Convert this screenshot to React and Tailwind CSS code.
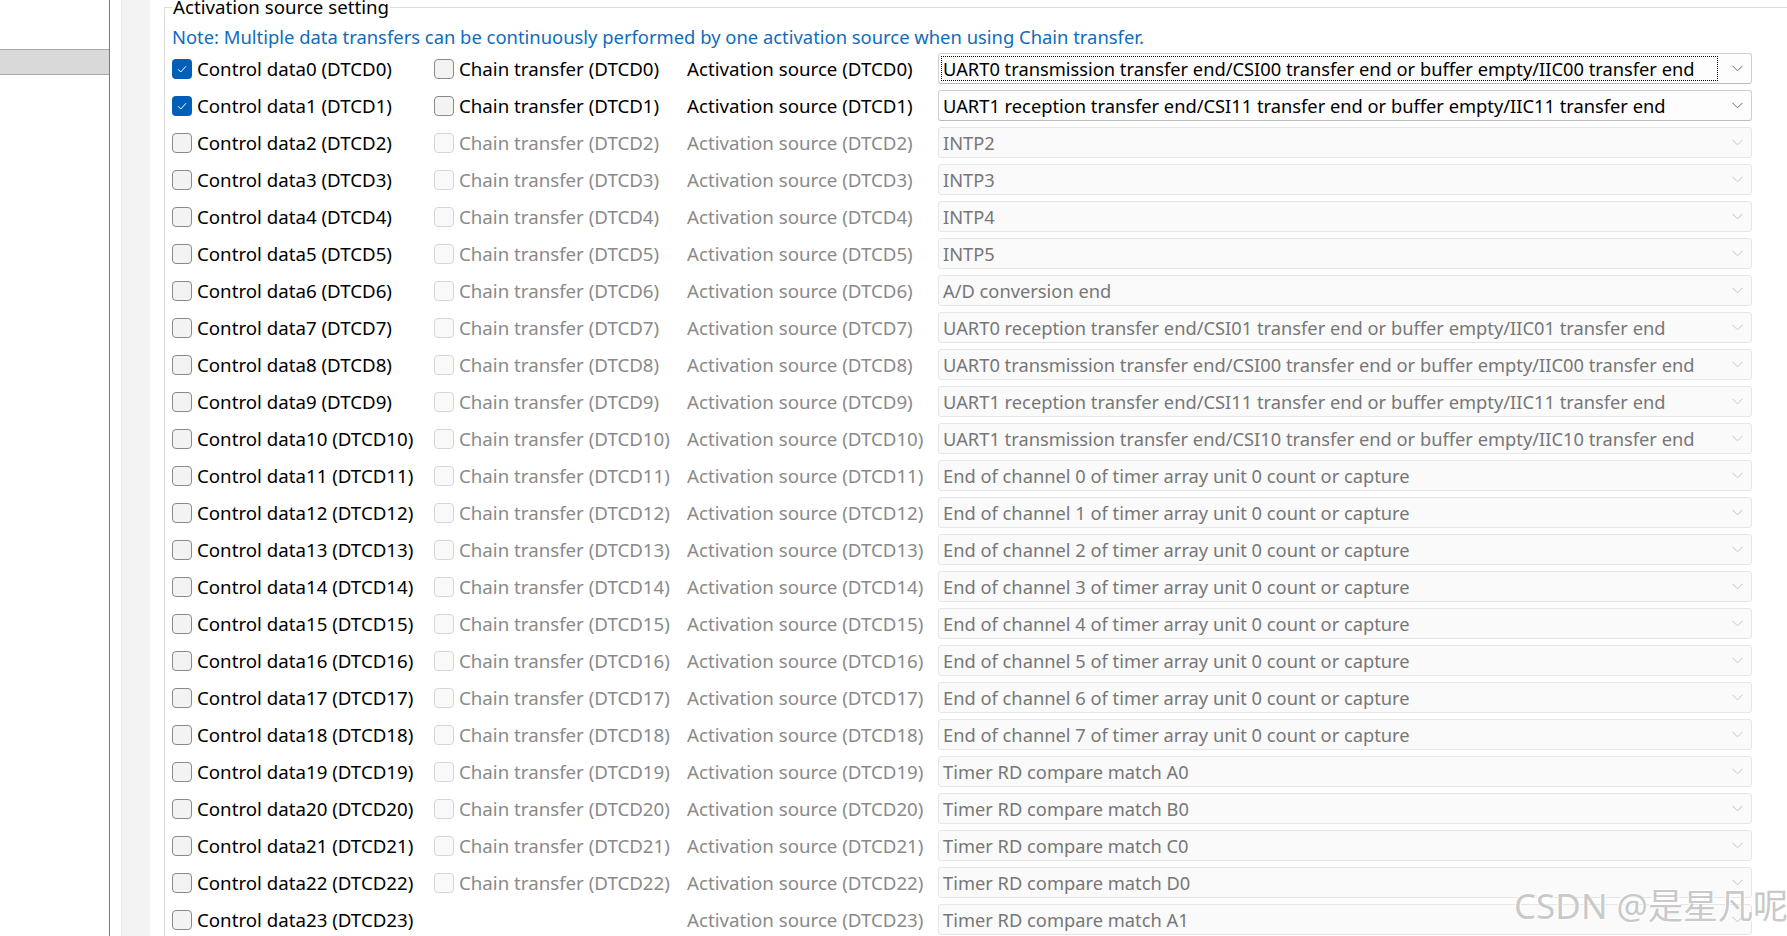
import React from 'react';

const sources = [
  'UART0 transmission transfer end/CSI00 transfer end or buffer empty/IIC00 transfer end',
  'UART1 reception transfer end/CSI11 transfer end or buffer empty/IIC11 transfer end',
  'INTP2',
  'INTP3',
  'INTP4',
  'INTP5',
  'A/D conversion end',
  'UART0 reception transfer end/CSI01 transfer end or buffer empty/IIC01 transfer end',
  'UART0 transmission transfer end/CSI00 transfer end or buffer empty/IIC00 transfer end',
  'UART1 reception transfer end/CSI11 transfer end or buffer empty/IIC11 transfer end',
  'UART1 transmission transfer end/CSI10 transfer end or buffer empty/IIC10 transfer end',
  'End of channel 0 of timer array unit 0 count or capture',
  'End of channel 1 of timer array unit 0 count or capture',
  'End of channel 2 of timer array unit 0 count or capture',
  'End of channel 3 of timer array unit 0 count or capture',
  'End of channel 4 of timer array unit 0 count or capture',
  'End of channel 5 of timer array unit 0 count or capture',
  'End of channel 6 of timer array unit 0 count or capture',
  'End of channel 7 of timer array unit 0 count or capture',
  'Timer RD compare match A0',
  'Timer RD compare match B0',
  'Timer RD compare match C0',
  'Timer RD compare match D0',
  'Timer RD compare match A1',
];

const CheckBox = ({ checked, disabled }) => {
  if (checked) {
    return (
      <span className="w-[20px] h-[20px] rounded-[4px] bg-[#005fb8] flex items-center justify-center shrink-0">
        <svg width="12" height="10" viewBox="0 0 12 10" fill="none">
          <path d="M2 5.2 L4.8 8 L10 2.2" stroke="#fff" strokeWidth="1" />
        </svg>
      </span>
    );
  }
  return (
    <span
      className={
        disabled
          ? 'w-[20px] h-[20px] rounded-[4px] border border-[#d6d6d6] bg-[#f9f9f9] shrink-0'
          : 'w-[20px] h-[20px] rounded-[4px] border border-[#8a8a8a] bg-[#f3f3f3] shrink-0'
      }
    />
  );
};

const Chevron = ({ disabled }) => (
  <svg width="11" height="7" viewBox="0 0 11 7" fill="none" className="shrink-0">
    <path d="M0.5 0.8 L5.5 5.8 L10.5 0.8" stroke={disabled ? '#c4c4c4' : '#6b6b6b'} strokeWidth="1" />
  </svg>
);

const Row = ({ i }) => {
  const enabled = i < 2;
  return (
    <div className="flex items-center h-[31px]">
      <div className="w-[262px] flex items-center gap-[5px]">
        <CheckBox checked={enabled} />
        <span className="text-black">{`Control data${i} (DTCD${i})`}</span>
      </div>
      <div className="w-[253px] flex items-center gap-[5px]">
        {i < 23 && (
          <>
            <CheckBox disabled={!enabled} />
            <span className={enabled ? 'text-black' : 'text-[#8a8a8a]'}>{`Chain transfer (DTCD${i})`}</span>
          </>
        )}
      </div>
      <div className={`w-[251px] ${enabled ? 'text-black' : 'text-[#8a8a8a]'}`}>{`Activation source (DTCD${i})`}</div>
      <div
        className={
          enabled
            ? 'w-[814px] h-[31px] rounded-[3px] border border-[#d0d0d0] border-b-[#bcbcbc] bg-[#fdfdfd] flex items-center p-[2px] pr-[8px]'
            : 'w-[814px] h-[31px] rounded-[3px] border border-[#e6e6e6] bg-[#fafafa] flex items-center p-[2px] pr-[8px]'
        }
      >
        <div
          className={
            i === 0
              ? 'flex-1 h-full border border-dotted border-black px-[1px] flex items-center text-black mr-[14px] text-[18.3px]'
              : `flex-1 h-full px-[2px] flex items-center mr-[14px] text-[18.3px] ${enabled ? 'text-black' : 'text-[#777777]'}`
          }
        >
          <span className="whitespace-nowrap">{sources[i]}</span>
        </div>
        <Chevron disabled={!enabled} />
      </div>
    </div>
  );
};

export default function App() {
  return (
    <div
      className="relative w-[1787px] h-[936px] overflow-hidden bg-white flex text-[18.7px] leading-[24px]"
      style={{ fontFamily: '"Noto Sans", "Segoe UI", sans-serif' }}
    >
      {/* left tree panel */}
      <div className="w-[110px] h-full border-r border-[#7a7a7a] shrink-0">
        <div className="mt-[49px] h-[26px] bg-[#d9d9d9] border-y border-[#a8a8a8]" />
      </div>
      <div className="w-[11px] shrink-0" />
      <div className="w-[29px] h-full bg-[#f3f3f3] border-l border-[#e8e8e8] shrink-0" />
      <div className="w-[14px] shrink-0" />

      <fieldset className="flex-1 h-[960px] border-l border-t border-[#dcdcdc] pl-[7px]">
        <legend className="px-[1px] leading-[14px] text-black">Activation source setting</legend>
        <div className="mt-[10px] h-[26px] flex items-center text-[#0f6cbd] text-[18.4px]">
          Note: Multiple data transfers can be continuously performed by one activation source when using Chain transfer.
        </div>
        <div className="mt-[3px] flex flex-col gap-[6px]">
          {sources.map((_, i) => (
            <Row key={i} i={i} />
          ))}
        </div>
      </fieldset>

      <div
        className="absolute left-[1514px] top-[885px] text-[35px] leading-[42px] text-[#c9c9c9] whitespace-nowrap"
        style={{ fontFamily: '"Noto Sans", "Noto Sans CJK SC", sans-serif', textShadow: '1px 1px 0 #ffffff, -1px -1px 0 #ffffff' }}
      >
        CSDN @是星凡呢
      </div>
    </div>
  );
}
